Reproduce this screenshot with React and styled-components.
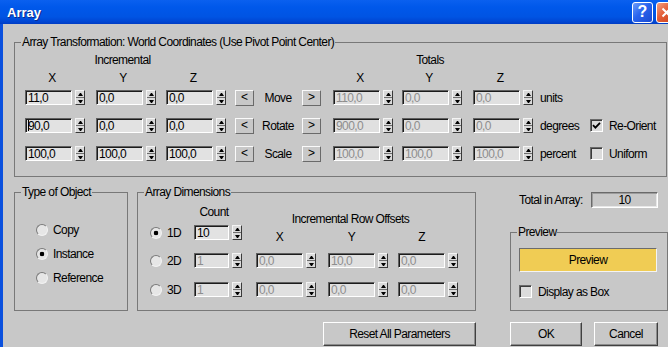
import React from 'react';
import styled, { createGlobalStyle, css } from 'styled-components';

const GlobalStyle = createGlobalStyle`
  html, body {
    margin: 0;
    padding: 0;
    background: #c8c8c8;
  }
  body {
    width: 668px;
    height: 347px;
    overflow: hidden;
    font-family: "Liberation Sans", Arial, sans-serif;
    font-size: 12px;
    letter-spacing: -0.6px;
    color: #000;
  }
`;

const transformRows = [
  { label: 'Move', inc: ['11,0', '0,0', '0,0'], total: ['110,0', '0,0', '0,0'], unit: 'units' },
  {
    label: 'Rotate',
    inc: ['90,0', '0,0', '0,0'],
    total: ['900,0', '0,0', '0,0'],
    unit: 'degrees',
    option: { label: 'Re-Orient', checked: true },
    caret: true,
  },
  {
    label: 'Scale',
    inc: ['100,0', '100,0', '100,0'],
    total: ['100,0', '100,0', '100,0'],
    unit: 'percent',
    option: { label: 'Uniform', checked: false },
  },
];

const dimRows = [
  { label: '1D', count: '10', checked: true },
  { label: '2D', count: '1', offsets: ['0,0', '10,0', '0,0'] },
  { label: '3D', count: '1', offsets: ['0,0', '0,0', '0,0'] },
];

const Window = styled.div`
  width: 680px;
  height: 360px;
  display: flex;
  flex-direction: column;
`;

/* title bar */
const TitleBar = styled.div`
  height: 24px;
  flex: none;
  display: flex;
  align-items: center;
  padding: 0 3px 0 7px;
  background: linear-gradient(
    to bottom,
    #0a60ef 0%,
    #0058ea 30%,
    #0054e3 70%,
    #0046d3 90%,
    #003cc4 100%
  );
`;

const Title = styled.span`
  font-weight: bold;
  font-size: 13px;
  letter-spacing: 0;
  color: #fff;
  text-shadow: 1px 1px 0 #0c2a8c;
`;

const CaptionButtons = styled.div`
  margin-left: auto;
  display: flex;
  gap: 3px;
`;

const CaptionButton = styled.button`
  width: 21px;
  height: 21px;
  padding: 0;
  border: 1px solid #fff;
  border-radius: 3px;
  display: flex;
  align-items: center;
  justify-content: center;
  color: #fff;
  font: bold 16px "Liberation Sans", Arial, sans-serif;
  letter-spacing: 0;
  background: ${(p) =>
    p.$variant === 'close'
      ? 'linear-gradient(135deg, #f3a083 0%, #e35d36 45%, #c8401a 100%)'
      : 'linear-gradient(135deg, #6c9cfa 0%, #2a64ee 45%, #1a4ad0 100%)'};
`;

/* body */
const Body = styled.div`
  flex: 1;
  border-left: 3px solid #0a50de;
  padding: 11px 0 0 11px;
  background: #c8c8c8;
`;

const Group = styled.fieldset`
  margin: 0;
  padding: 0;
  min-width: 0;
  box-sizing: border-box;
  border: 1px solid #787878;
  width: ${(p) => p.$width}px;
  ${(p) =>
    p.$height &&
    css`
      height: ${p.$height}px;
    `}
`;

const Legend = styled.legend`
  margin-left: 6px;
  padding: 0 1px;
  line-height: 14px;
  font-size: 12px;
`;

/* array transformation table */
const transformColumns = css`
  display: grid;
  grid-template-columns: 71px 70px 69px 19px 48px 31px 69px 71px 67px 50px 1fr;
`;

const TransformTable = styled.div`
  padding: 4px 0 17px 10px;
`;

const TransformHead = styled.div`
  ${transformColumns}
  height: ${(p) => p.$height}px;
  align-items: start;
`;

const TransformRow = styled.div`
  ${transformColumns}
  height: 15px;
  align-items: center;
  & + & {
    margin-top: 13px;
  }
`;

const Heading = styled.div`
  grid-column: ${(p) => p.$col} / span ${(p) => p.$span || 1};
  width: ${(p) => p.$width}px;
  margin-top: ${(p) => p.$top || 0}px;
  text-align: center;
  line-height: 14px;
`;

const CellText = styled.span`
  line-height: 17px;
  padding-top: 2px;
  white-space: nowrap;
  ${(p) =>
    p.$center &&
    css`
      text-align: center;
    `}
`;

const FieldWrap = styled.div`
  display: flex;
  gap: 3px;
`;

const EntryBox = styled.span`
  position: relative;
  display: block;
  ${(p) =>
    p.$caret &&
    css`
      &::after {
        content: '';
        position: absolute;
        left: 3px;
        top: 2px;
        width: 1px;
        height: 11px;
        background: #000;
      }
    `}
`;

const Entry = styled.input`
  display: block;
  box-sizing: border-box;
  width: ${(p) => p.$width}px;
  height: 15px;
  margin: 0;
  padding: 0 0 0 2px;
  font: 12px "Liberation Sans", Arial, sans-serif;
  letter-spacing: -0.6px;
  color: #000;
  background: #e2e2e2;
  border: 1px solid;
  border-color: #606060 #fff #fff #606060;
  box-shadow: inset 1px 1px 0 #1c1c1c;
  outline: none;
  &:disabled {
    color: #8e8e8e;
    background: #e0e0e0;
    -webkit-text-fill-color: #8e8e8e;
  }
`;

const Spinner = styled.div`
  box-sizing: border-box;
  width: 10px;
  height: 15px;
  display: flex;
  flex-direction: column;
  border: 1px solid;
  border-color: #f4f4f4 #3a3a3a #3a3a3a #f4f4f4;
  background: #dadada;
`;

const SpinHalf = styled.span`
  flex: 1;
  display: flex;
  align-items: center;
  justify-content: center;
  ${(p) =>
    p.$up &&
    css`
      border-bottom: 1px solid #6e6e6e;
    `}
  &::before {
    content: '';
    width: 1px;
    height: 0;
    border-left: 2px solid transparent;
    border-right: 2px solid transparent;
    ${(p) =>
      p.$up
        ? css`
            border-bottom: 3px solid #000;
          `
        : css`
            border-top: 3px solid #000;
          `}
  }
`;

const NudgeButton = styled.button`
  box-sizing: border-box;
  width: 19px;
  height: 16px;
  padding: 0 0 1px;
  border: 1px solid;
  border-color: #fafafa #6a6a6a #6a6a6a #fafafa;
  background: #c8c8c8;
  font: 12px "Liberation Sans", Arial, sans-serif;
  line-height: 1;
  color: #000;
`;

const CheckRow = styled.label`
  display: flex;
  align-items: center;
  gap: 6px;
  height: ${(p) => p.$height || 13}px;
  white-space: nowrap;
  ${(p) =>
    p.$top &&
    css`
      margin-top: ${p.$top}px;
    `}
`;

const CheckBox = styled.span`
  box-sizing: border-box;
  width: 13px;
  height: 13px;
  flex: none;
  display: flex;
  align-items: center;
  justify-content: center;
  border: 1px solid;
  border-color: #6a6a6a #fff #fff #6a6a6a;
  box-shadow: inset 1px 1px 0 #3c3c3c;
  background: #dcdcdc;
`;

/* lower area */
const Lower = styled.div`
  display: grid;
  grid-template-columns: 123px 373px 158px;
  grid-template-rows: 126px 24px;
  row-gap: 11px;
  margin-top: 8px;
`;

const RadioList = styled.div`
  display: flex;
  flex-direction: column;
  gap: 8px;
  padding: 23px 0 0 21px;
`;

const RadioRow = styled.label`
  display: flex;
  align-items: center;
  gap: 5px;
  height: ${(p) => p.$height || 16}px;
`;

const Radio = styled.span`
  box-sizing: border-box;
  width: 12px;
  height: 12px;
  flex: none;
  border-radius: 50%;
  border: 1px solid;
  border-color: #7a7a7a #f2f2f2 #f2f2f2 #7a7a7a;
  background: ${(p) =>
    p.$checked
      ? 'radial-gradient(circle, #000 0 2px, #e6e6e6 2.6px)'
      : '#e6e6e6'};
`;

const DimGrid = styled.div`
  display: grid;
  grid-template-columns: 44px 62px 72px 70px 1fr;
  grid-template-rows: 26px 28px 29px 15px;
  padding-left: 12px;
  align-items: start;
`;

const RightColumn = styled.div`
  display: flex;
  flex-direction: column;
`;

const TotalRow = styled.div`
  display: flex;
  align-items: center;
  justify-content: space-between;
  height: 16px;
  margin-top: 7px;
  padding: 0 10px 0 9px;
`;

const TotalField = styled.div`
  box-sizing: border-box;
  width: 67px;
  height: 16px;
  border: 1px solid;
  border-color: #6a6a6a #fff #fff #6a6a6a;
  box-shadow: inset 1px 1px 0 #9c9c9c, inset -1px -1px 0 #e8e8e8;
  text-align: center;
  line-height: 14px;
`;

const PreviewGroup = styled(Group)`
  margin-top: 17px;
`;

const PreviewBody = styled.div`
  padding: 9px 0 0 8px;
`;

const PushButton = styled.button`
  box-sizing: border-box;
  width: ${(p) => p.$width}px;
  height: 24px;
  padding: 0;
  border: 1px solid;
  border-color: #fff #404040 #404040 #fff;
  box-shadow: inset -1px -1px 0 #8c8c8c;
  background: #c8c8c8;
  font: 12px "Liberation Sans", Arial, sans-serif;
  letter-spacing: -0.6px;
  color: #000;
  ${(p) =>
    p.$active &&
    css`
      border-color: #6c6c6c #f4f4f4 #f4f4f4 #6c6c6c;
      box-shadow: none;
      background: #f0cc54;
    `}
  ${(p) =>
    p.$alignEnd &&
    css`
      justify-self: end;
      margin-right: 34px;
    `}
`;

const DialogButtons = styled.div`
  display: flex;
  gap: 12px;
`;

function Field({ value, width = 47, disabled, caret }) {
  return (
    <FieldWrap>
      <EntryBox $caret={caret}>
        <Entry $width={width} value={value} disabled={disabled} readOnly />
      </EntryBox>
      <Spinner>
        <SpinHalf $up />
        <SpinHalf />
      </Spinner>
    </FieldWrap>
  );
}

function Check({ checked }) {
  return (
    <CheckBox>
      {checked && (
        <svg width="9" height="9" viewBox="0 0 9 9">
          <path d="M1 4.2 L3.4 6.6 L8 1.8" fill="none" stroke="#000" strokeWidth="1.8" />
        </svg>
      )}
    </CheckBox>
  );
}

export default function App() {
  return (
    <>
      <GlobalStyle />
      <Window>
        <TitleBar>
          <Title>Array</Title>
          <CaptionButtons>
            <CaptionButton $variant="help">?</CaptionButton>
            <CaptionButton $variant="close">
              <svg width="11" height="11" viewBox="0 0 11 11">
                <path d="M1.5 1.5 L9.5 9.5 M9.5 1.5 L1.5 9.5" stroke="#fff" strokeWidth="2" />
              </svg>
            </CaptionButton>
          </CaptionButtons>
        </TitleBar>

        <Body>
          <Group $width={653}>
            <Legend>Array Transformation: World Coordinates (Use Pivot Point Center)</Legend>
            <TransformTable>
              <TransformHead $height={18}>
                <Heading $col={1} $span={3} $width={195}>Incremental</Heading>
                <Heading $col={7} $span={3} $width={194}>Totals</Heading>
              </TransformHead>
              <TransformHead $height={17}>
                {['X', 'Y', 'Z', 'X', 'Y', 'Z'].map((axis, i) => (
                  <Heading key={i} $col={i < 3 ? i + 1 : i + 4} $width={54}>
                    {axis}
                  </Heading>
                ))}
              </TransformHead>
              {transformRows.map((row) => (
                <TransformRow key={row.label}>
                  {row.inc.map((v, i) => (
                    <Field key={'inc' + i} value={v} caret={row.caret && i === 0} />
                  ))}
                  <NudgeButton>&lt;</NudgeButton>
                  <CellText $center>{row.label}</CellText>
                  <NudgeButton>&gt;</NudgeButton>
                  {row.total.map((v, i) => (
                    <Field key={'tot' + i} value={v} disabled />
                  ))}
                  <CellText>{row.unit}</CellText>
                  {row.option && (
                    <CheckRow $height={15}>
                      <Check checked={row.option.checked} />
                      {row.option.label}
                    </CheckRow>
                  )}
                </TransformRow>
              ))}
            </TransformTable>
          </Group>

          <Lower>
            <Group $width={114} $height={126}>
              <Legend>Type of Object</Legend>
              <RadioList>
                {['Copy', 'Instance', 'Reference'].map((t) => (
                  <RadioRow key={t}>
                    <Radio $checked={t === 'Instance'} />
                    {t}
                  </RadioRow>
                ))}
              </RadioList>
            </Group>

            <Group $width={339} $height={126}>
              <Legend>Array Dimensions</Legend>
              <DimGrid>
                <span />
                <Heading $col={2} $width={40} $top={6}>Count</Heading>
                <Heading $col={3} $span={3} $width={189} $top={13}>
                  Incremental Row Offsets
                </Heading>
                {dimRows.map((row) => (
                  <React.Fragment key={row.label}>
                    <RadioRow $height={15}>
                      <Radio $checked={row.checked} />
                      {row.label}
                    </RadioRow>
                    <Field value={row.count} width={35} disabled={!row.checked} />
                    {row.offsets
                      ? row.offsets.map((v, i) => <Field key={i} value={v} disabled />)
                      : ['X', 'Y', 'Z'].map((axis, i) => (
                          <Heading key={axis} $col={i + 3} $width={47} $top={5}>
                            {axis}
                          </Heading>
                        ))}
                  </React.Fragment>
                ))}
              </DimGrid>
            </Group>

            <RightColumn>
              <TotalRow>
                <span>Total in Array:</span>
                <TotalField>10</TotalField>
              </TotalRow>
              <PreviewGroup $width={158} $height={86}>
                <Legend>Preview</Legend>
                <PreviewBody>
                  <PushButton $width={138} $active>Preview</PushButton>
                  <CheckRow $top={13}>
                    <Check />
                    Display as Box
                  </CheckRow>
                </PreviewBody>
              </PreviewGroup>
            </RightColumn>

            <span />
            <PushButton $width={153} $alignEnd>Reset All Parameters</PushButton>
            <DialogButtons>
              <PushButton $width={72}>OK</PushButton>
              <PushButton $width={64}>Cancel</PushButton>
            </DialogButtons>
          </Lower>
        </Body>
      </Window>
    </>
  );
}
